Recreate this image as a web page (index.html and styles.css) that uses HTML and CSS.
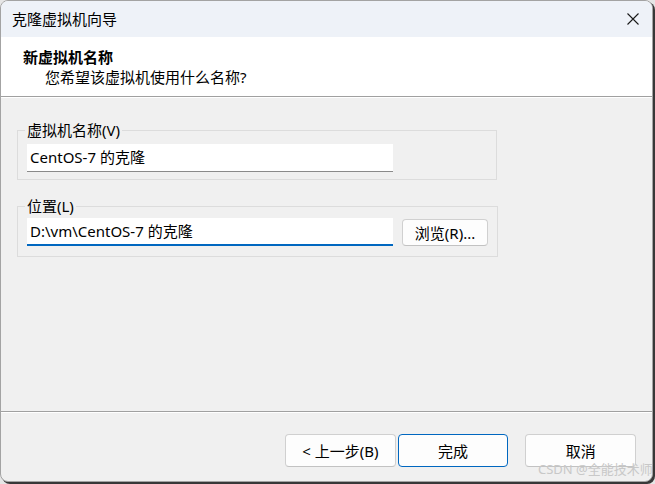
FILE: index.html
```html
<!DOCTYPE html>
<html lang="zh-CN">
<head>
<meta charset="utf-8">
<title>克隆虚拟机向导</title>
<link rel="stylesheet" href="styles.css">
</head>
<body>
<div class="window">
  <div class="titlebar">
    <span class="title">克隆虚拟机向导</span>
    <span class="close">
      <svg width="12" height="12" viewBox="0 0 12 12"><path d="M0.5 0.5 L11.5 11.5 M11.5 0.5 L0.5 11.5" stroke="#1a1a1a" stroke-width="1.1" fill="none"/></svg>
    </span>
  </div>
  <div class="header">
    <div class="h-title">新虚拟机名称</div>
    <div class="h-sub">您希望该虚拟机使用什么名称?</div>
  </div>
  <div class="sep"></div>
  <div class="content">
    <fieldset class="group group-name">
      <legend>虚拟机名称(V)</legend>
      <div class="row">
        <div class="input">CentOS-7 的克隆</div>
      </div>
    </fieldset>
    <fieldset class="group group-loc">
      <legend>位置(L)</legend>
      <div class="row">
        <div class="input focused">D:\vm\CentOS-7 的克隆</div>
        <button class="btn browse">浏览(R)...</button>
      </div>
    </fieldset>
  </div>
  <div class="sep"></div>
  <div class="footer">
    <button class="btn big">&lt; 上一步(B)</button>
    <button class="btn big primary">完成</button>
    <button class="btn big cancel">取消</button>
  </div>
  <div class="watermark">CSDN @全能技术师</div>
</div>
</body>
</html>
```
FILE: styles.css
```css
html, body {
  margin: 0;
  padding: 0;
}
body {
  width: 655px;
  height: 484px;
  background: #e6e6e6;
  font-family: "Noto Sans", "Noto Sans CJK SC", sans-serif;
  font-size: 15px;
  color: #000;
  overflow: hidden;
}
.window {
  position: relative;
  box-sizing: border-box;
  width: 653px;
  height: 482px;
  border: 1px solid #a3a3a3;
  border-radius: 8px;
  background: #f0f0f0;
  box-shadow: 2px 2px 0 #383838;
  display: flex;
  flex-direction: column;
  overflow: hidden;
}
.titlebar {
  height: 36px;
  flex: none;
  background: #eef2f8;
  display: flex;
  align-items: center;
  justify-content: space-between;
  padding: 0 13px 0 11px;
}
.title {
  font-size: 15px;
  line-height: 20px;
}
.close {
  display: flex;
  width: 12px;
  height: 12px;
}
.header {
  height: 59px;
  flex: none;
  background: #fff;
  box-sizing: border-box;
  padding: 10px 0 0 22px;
}
.h-title {
  font-weight: bold;
  line-height: 20px;
}
.h-sub {
  line-height: 20px;
  padding-left: 22px;
}
.sep {
  flex: none;
  height: 1px;
  border-top: 1px solid #a0a0a0;
  background: #fff;
}
.content {
  flex: 1;
  padding: 22px 0 0 16px;
}
.group {
  margin: 0;
  width: 480px;
  box-sizing: border-box;
  border: 1px solid #dcdcdc;
  padding: 0 9px;
}
.group legend {
  padding: 0 2px;
  margin-left: -2px;
  line-height: 20px;
}
.group-name {
  padding-bottom: 7px;
}
.group-loc {
  margin-top: 16px;
  padding-bottom: 10px;
}
.group-name .row {
  margin-top: 4px;
}
.group-loc .row {
  margin-top: 2px;
}
.row {
  display: flex;
  align-items: center;
  gap: 9px;
}
.input {
  box-sizing: border-box;
  width: 366px;
  height: 28px;
  background: #fff;
  border-bottom: 1px solid #8a8a8a;
  padding: 0 3px;
  line-height: 27px;
  white-space: nowrap;
}
.input.focused {
  border-bottom: 2px solid #0067c0;
  line-height: 26px;
}
.btn {
  font-family: inherit;
  font-size: 15px;
  color: #000;
  background: #fdfdfd;
  border: 1px solid #d0d0d0;
  border-bottom-color: #c2c2c2;
  border-radius: 4px;
  padding: 0;
  box-sizing: border-box;
}
.browse {
  width: 86px;
  height: 27px;
  margin-top: 1px;
}
.footer {
  flex: none;
  height: 68px;
  box-sizing: border-box;
  display: flex;
  padding: 21px 16px 0 284px;
}
.big {
  width: 111px;
  height: 33px;
}
.primary {
  margin-left: 2px;
  border: 1px solid #0067c0;
}
.cancel {
  margin-left: 17px;
}
.watermark {
  position: absolute;
  left: 537px;
  top: 459px;
  font-size: 13px;
  line-height: 18px;
  color: #c8c8c8;
  white-space: nowrap;
}
```
